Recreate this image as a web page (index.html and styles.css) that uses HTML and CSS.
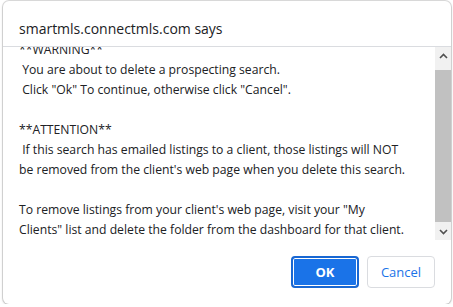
FILE: index.html
```html
<!DOCTYPE html>
<html>
<head>
<meta charset="utf-8">
<link rel="stylesheet" href="styles.css">
</head>
<body>
<div class="dialog">
  <div class="title">smartmls.connectmls.com says</div>
  <div class="body">
    <div class="viewport">
      <div class="message">**WARNING**
 You are about to delete a prospecting search.
 Click "Ok" To continue, otherwise click "Cancel".

**ATTENTION**
 If this search has emailed listings to a client, those listings will NOT be removed from the client's web page when you delete this search.

To remove listings from your client's web page, visit your "My Clients" list and delete the folder from the dashboard for that client.</div>
    </div>
    <div class="scrollbar">
      <div class="sb-btn"><svg width="9" height="6" viewBox="0 0 9 6"><path d="M1 5 L4.5 1.5 L8 5" fill="none" stroke="#505050" stroke-width="1.6"/></svg></div>
      <div class="sb-track"><div class="sb-thumb"></div></div>
      <div class="sb-btn"><svg width="9" height="6" viewBox="0 0 9 6"><path d="M1 1 L4.5 4.5 L8 1" fill="none" stroke="#505050" stroke-width="1.6"/></svg></div>
    </div>
  </div>
  <div class="actions">
    <button class="btn btn-ok">OK</button>
    <button class="btn btn-cancel">Cancel</button>
  </div>
</div>
</body>
</html>
```
FILE: styles.css
```css
html, body {
  margin: 0;
  padding: 0;
  background: #ffffff;
}
body {
  padding: 1px 2px 0 3px;
  font-family: "Open Sans", "Noto Sans", sans-serif;
  color: #202124;
}
.dialog {
  width: 448px;
  height: 303px;
  box-sizing: border-box;
  background: #fff;
  border-radius: 6px;
  box-shadow: 0 0 0 1px rgba(0,0,0,0.13), 0 1px 3px rgba(0,0,0,0.18);
  display: flex;
  flex-direction: column;
  overflow: hidden;
}
.title {
  height: 46px;
  box-sizing: border-box;
  padding: 16px 16px 0 16px;
  font-size: 14px;
  line-height: 24px;
  color: #202124;
  border-bottom: 1px solid #dadce0;
}
.body {
  display: flex;
  height: 193px;
}
.viewport {
  flex: 1;
  overflow: hidden;
  padding-left: 16px;
}
.message {
  margin-top: -7px;
  width: 388px;
  white-space: pre-wrap;
  font-size: 12.2px;
  line-height: 20px;
  color: #202124;
}
.scrollbar {
  width: 16px;
  background: #f1f1f1;
  display: flex;
  flex-direction: column;
}
.sb-btn {
  height: 17px;
  display: flex;
  align-items: center;
  justify-content: center;
}
.sb-track {
  flex: 1;
  display: flex;
  flex-direction: column;
  padding: 6px 0 1px 0;
}
.sb-thumb {
  flex: 1;
  background: #c1c1c1;
}
.actions {
  display: flex;
  justify-content: flex-end;
  gap: 8px;
  padding: 16px 16px 0 16px;
}
.btn {
  width: 68px;
  height: 32px;
  box-sizing: border-box;
  border-radius: 4px;
  font-family: "Open Sans", "Noto Sans", sans-serif;
  font-size: 13px;
  padding: 0;
  cursor: pointer;
}
.btn-ok {
  background: #1a73e8;
  color: #fff;
  font-weight: 700;
  border: 2px solid #1967d2;
  box-shadow: inset 0 0 0 1px #fff;
}
.btn-cancel {
  background: #fff;
  color: #1a73e8;
  font-weight: 500;
  border: 1px solid #dadce0;
}
```
